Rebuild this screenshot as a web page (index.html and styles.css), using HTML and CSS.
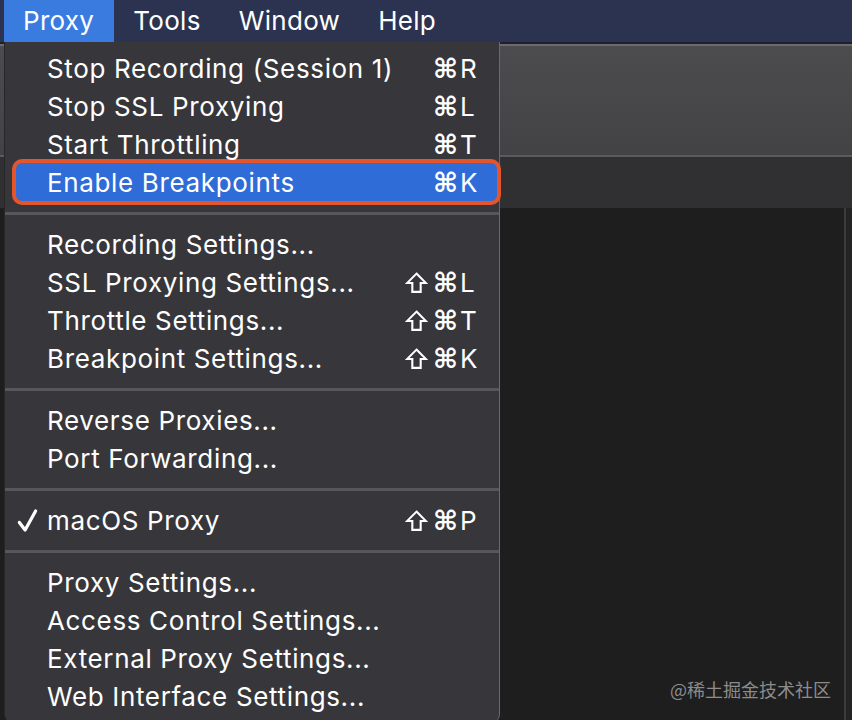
FILE: index.html
```html
<!DOCTYPE html>
<html>
<head>
<meta charset="utf-8">
<link rel="stylesheet" href="styles.css">
</head>
<body>
<div class="screen">
  <div class="menubar">
    <div class="mb-item active">Proxy</div>
    <div class="mb-item">Tools</div>
    <div class="mb-item">Window</div>
    <div class="mb-item">Help</div>
  </div>
  <div class="app">
    <div class="topline"></div>
    <div class="toolbar"></div>
    <div class="hsep"></div>
    <div class="tabs"></div>
    <div class="content">
      <div class="main"></div>
      <div class="splitter"></div>
      <div class="side"></div>
    </div>
  </div>

  <div class="menu">
    <div class="item"><span class="check"></span><span class="label">Stop Recording (Session 1)</span><span class="sc"><span class="cmd">⌘</span><span class="key">R</span></span></div>
    <div class="item"><span class="check"></span><span class="label">Stop SSL Proxying</span><span class="sc"><span class="cmd">⌘</span><span class="key">L</span></span></div>
    <div class="item"><span class="check"></span><span class="label">Start Throttling</span><span class="sc"><span class="cmd">⌘</span><span class="key">T</span></span></div>
    <div class="item hl"><span class="check"></span><span class="label">Enable Breakpoints</span><span class="sc"><span class="cmd">⌘</span><span class="key">K</span></span></div>
    <div class="sep"></div>
    <div class="item"><span class="check"></span><span class="label">Recording Settings...</span></div>
    <div class="item"><span class="check"></span><span class="label">SSL Proxying Settings...</span><span class="sc"><svg class="shift" viewBox="0 0 22 22"><path d="M11 2.5 L20 11.5 L15 11.5 L15 20 L7 20 L7 11.5 L2 11.5 Z"/></svg><span class="cmd">⌘</span><span class="key">L</span></span></div>
    <div class="item"><span class="check"></span><span class="label">Throttle Settings...</span><span class="sc"><svg class="shift" viewBox="0 0 22 22"><path d="M11 2.5 L20 11.5 L15 11.5 L15 20 L7 20 L7 11.5 L2 11.5 Z"/></svg><span class="cmd">⌘</span><span class="key">T</span></span></div>
    <div class="item"><span class="check"></span><span class="label">Breakpoint Settings...</span><span class="sc"><svg class="shift" viewBox="0 0 22 22"><path d="M11 2.5 L20 11.5 L15 11.5 L15 20 L7 20 L7 11.5 L2 11.5 Z"/></svg><span class="cmd">⌘</span><span class="key">K</span></span></div>
    <div class="sep"></div>
    <div class="item"><span class="check"></span><span class="label">Reverse Proxies...</span></div>
    <div class="item"><span class="check"></span><span class="label">Port Forwarding...</span></div>
    <div class="sep"></div>
    <div class="item"><span class="check"><svg class="tick" viewBox="0 0 22 26"><path d="M2.5 15 L8.5 23 L19.5 3"/></svg></span><span class="label">macOS Proxy</span><span class="sc"><svg class="shift" viewBox="0 0 22 22"><path d="M11 2.5 L20 11.5 L15 11.5 L15 20 L7 20 L7 11.5 L2 11.5 Z"/></svg><span class="cmd">⌘</span><span class="key">P</span></span></div>
    <div class="sep"></div>
    <div class="item"><span class="check"></span><span class="label">Proxy Settings...</span></div>
    <div class="item"><span class="check"></span><span class="label">Access Control Settings...</span></div>
    <div class="item"><span class="check"></span><span class="label">External Proxy Settings...</span></div>
    <div class="item"><span class="check"></span><span class="label">Web Interface Settings...</span></div>
  </div>

  <div class="watermark">@稀土掘金技术社区</div>
</div>
</body>
</html>
```
FILE: styles.css
```css
* { box-sizing: border-box; }
html, body { margin: 0; padding: 0; }
body {
  background: #1f1f1f;
  font-family: "Inter", "Liberation Sans", "Noto Sans CJK SC", sans-serif;
}
.screen {
  position: relative;
  width: 852px;
  height: 720px;
  overflow: hidden;
  display: flex;
  flex-direction: column;
}
.menubar {
  height: 42px;
  flex: none;
  background: #2b3350;
  display: flex;
  padding-left: 4px;
}
.mb-item {
  padding: 0 19px 0 19px;
  line-height: 41px;
  font-size: 26px;
  color: #ffffff;
  letter-spacing: 0.3px;
}
.mb-item.active {
  background: #3a7be0;
  padding-right: 20px;
}
.app {
  flex: 1;
  display: flex;
  flex-direction: column;
  min-height: 0;
}
.topline {
  height: 4px;
  background: #6b6b6e;
  border-top: 2px solid #1d2030;
}
.toolbar {
  height: 109px;
  background: linear-gradient(180deg, #4c4b4d 0%, #434345 100%);
}
.hsep {
  height: 2px;
  background: #5b5b5d;
}
.tabs {
  height: 51px;
  background: #303032;
}
.content {
  flex: 1;
  display: flex;
}
.main {
  flex: 1;
  background: #1e1e1e;
}
.splitter {
  width: 2px;
  background: #3b3b3d;
}
.side {
  width: 6px;
  background: #232323;
}

.menu {
  position: absolute;
  top: 42px;
  left: 4px;
  width: 496px;
  height: 682px;
  background: #37373b;
  border-left: 1px solid #27272a;
  border-right: 1px solid #6a6a6e;
  border-radius: 0 0 10px 10px;
  padding: 7px 0 4px;
  color: #ffffff;
  font-size: 26px;
}
.item {
  height: 38px;
  display: flex;
  align-items: center;
  padding: 0 19px 0 12px;
  letter-spacing: 0.65px;
}
.check {
  width: 30px;
  flex: none;
  display: flex;
  align-items: center;
}
.tick {
  width: 21px;
  height: 25px;
  fill: none;
  stroke: #ffffff;
  stroke-width: 3.4;
  stroke-linecap: round;
  stroke-linejoin: round;
}
.label {
  flex: 1;
  white-space: nowrap;
}
.sc {
  display: flex;
  align-items: center;
}
.shift {
  width: 23px;
  height: 23px;
  margin-right: 5px;
  margin-left: 2px;
  fill: none;
  stroke: #ffffff;
  stroke-width: 2;
  stroke-linejoin: miter;
}
.cmd {
  font-family: "DejaVu Sans", sans-serif;
  font-size: 27px;
  font-weight: bold;
  letter-spacing: 0;
  line-height: 1;
}
.key {
  width: 20px;
  margin-left: 2px;
  letter-spacing: 0;
}
.item.hl {
  background: #2f6cd8;
  margin: 0 2px 0 11px;
  padding: 0 17px 0 1px;
  border-radius: 6px;
  box-shadow: 0 0 0 4px #e4552b;
}
.sep {
  height: 24px;
  display: flex;
  align-items: center;
}
.sep::before {
  content: "";
  display: block;
  width: 100%;
  height: 3px;
  background: #56575b;
}
.watermark {
  position: absolute;
  left: 670px;
  top: 676px;
  font-size: 18px;
  color: #8c8c8c;
  font-family: "Noto Sans CJK SC", "Liberation Sans", sans-serif;
}
```
